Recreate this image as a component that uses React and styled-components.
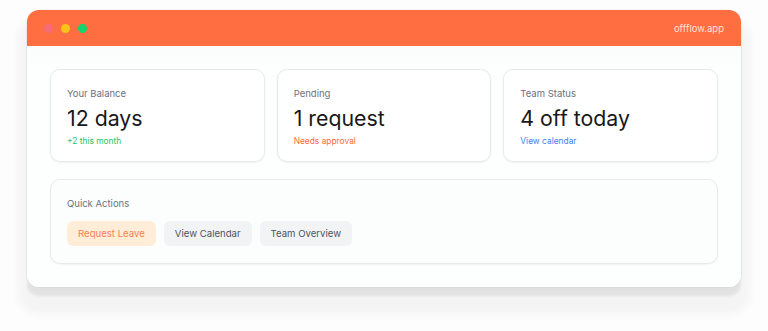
import React from 'react';
import styled, { createGlobalStyle } from 'styled-components';

const GlobalStyle = createGlobalStyle`
  html, body {
    margin: 0;
    padding: 0;
    background: #fdfdfd;
    font-family: Inter, "Liberation Sans", sans-serif;
  }
  * { box-sizing: border-box; }
`;

const stats = [
  { label: 'Your Balance', value: '12 days', note: '+2 this month', tone: 'green' },
  { label: 'Pending', value: '1 request', note: 'Needs approval', tone: 'orange' },
  { label: 'Team Status', value: '4 off today', note: 'View calendar', tone: 'blue' },
];

const actions = [
  { label: 'Request Leave', primary: true },
  { label: 'View Calendar' },
  { label: 'Team Overview' },
];

export default function App () {
  return (
    <>
      <GlobalStyle />
      <Page>
        <Window>
          <TitleBar>
            <Dots>
              <Dot color="#f56b78" />
              <Dot color="#fcc21b" />
              <Dot color="#14d46e" />
            </Dots>
            <Domain>offflow.app</Domain>
          </TitleBar>
          <Body>
            <StatGrid>
              {stats.map(s => (
                <Card key={s.label}>
                  <Label>{s.label}</Label>
                  <Value>{s.value}</Value>
                  <Note tone={s.tone}>{s.note}</Note>
                </Card>
              ))}
            </StatGrid>
            <ActionsCard>
              <Label>Quick Actions</Label>
              <ActionRow>
                {actions.map(a => (
                  <ActionButton key={a.label} primary={a.primary}>{a.label}</ActionButton>
                ))}
              </ActionRow>
            </ActionsCard>
          </Body>
        </Window>
      </Page>
    </>
  );
}

const toneColors = {
  green: '#22c55e',
  orange: '#ff6a35',
  blue: '#3b82f6',
};

const Page = styled.div`
  width: 768px;
  height: 331px;
  padding: 10px 0 0 27px;
`;

const Window = styled.div`
  width: 714px;
  height: 277px;
  border-radius: 12px;
  background: linear-gradient(180deg, #f8f9fa 0px, #fdfefe 60px);
  overflow: hidden;
  box-shadow:
    0 0 0 1px rgba(0, 0, 0, 0.03),
    0 9px 3px rgba(0, 0, 0, 0.07),
    0 18px 8px 10px rgba(0, 0, 0, 0.035);
`;

const TitleBar = styled.div`
  height: 36px;
  background: #ff6e41;
  display: flex;
  align-items: center;
  justify-content: space-between;
  padding: 0 17px;
`;

const Dots = styled.div`
  display: flex;
  gap: 8px;
`;

const Dot = styled.span`
  width: 9px;
  height: 9px;
  border-radius: 50%;
  background: ${p => p.color};
`;

const Domain = styled.span`
  color: rgba(255, 255, 255, 0.82);
  font-size: 9.5px;
`;

const Body = styled.div`
  padding: 23px;
  display: flex;
  flex-direction: column;
  gap: 17px;
`;

const StatGrid = styled.div`
  display: grid;
  grid-template-columns: repeat(3, 1fr);
  gap: 12px;
`;

const Card = styled.div`
  height: 93px;
  background: #fff;
  border: 1px solid #e8e9ec;
  border-radius: 10px;
  padding: 17px 16px 0;
  box-shadow: 0 1px 2px rgba(0, 0, 0, 0.05);
`;

const Label = styled.div`
  font-size: 9.5px;
  color: #6b7280;
  line-height: 14px;
`;

const Value = styled.div`
  font-size: 21.3px;
  color: #18181b;
  line-height: 28px;
  margin-top: 3px;
`;

const Note = styled.div`
  font-size: 8.4px;
  line-height: 12px;
  margin-top: 3px;
  color: ${p => toneColors[p.tone]};
`;

const ActionsCard = styled(Card)`
  height: 85px;
  padding-top: 17px;
  background: #fcfdfd;
`;

const ActionRow = styled.div`
  display: flex;
  gap: 8px;
  margin-top: 10px;
`;

const ActionButton = styled.button`
  height: 25px;
  padding: 0 11px;
  border: none;
  border-radius: 6px;
  font-family: inherit;
  font-size: 9.6px;
  background: ${p => (p.primary ? '#ffedd8' : '#f2f3f5')};
  color: ${p => (p.primary ? '#ff7e50' : '#4b5563')};
`;
